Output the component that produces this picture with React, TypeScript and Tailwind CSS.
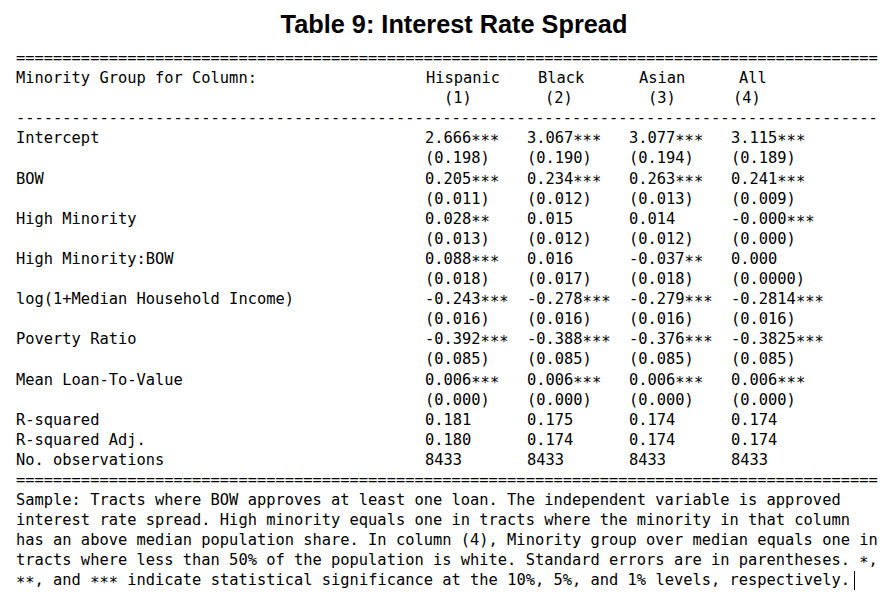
import React from "react";

type Row = { label: string; vals: string[]; ses?: string[] };

const rows: Row[] = [
  { label: "Intercept", vals: ["2.666***", "3.067***", "3.077***", "3.115***"], ses: ["(0.198)", "(0.190)", "(0.194)", "(0.189)"] },
  { label: "BOW", vals: ["0.205***", "0.234***", "0.263***", "0.241***"], ses: ["(0.011)", "(0.012)", "(0.013)", "(0.009)"] },
  { label: "High Minority", vals: ["0.028**", "0.015", "0.014", "-0.000***"], ses: ["(0.013)", "(0.012)", "(0.012)", "(0.000)"] },
  { label: "High Minority:BOW", vals: ["0.088***", "0.016", "-0.037**", "0.000"], ses: ["(0.018)", "(0.017)", "(0.018)", "(0.0000)"] },
  { label: "log(1+Median Household Income)", vals: ["-0.243***", "-0.278***", "-0.279***", "-0.2814***"], ses: ["(0.016)", "(0.016)", "(0.016)", "(0.016)"] },
  { label: "Poverty Ratio", vals: ["-0.392***", "-0.388***", "-0.376***", "-0.3825***"], ses: ["(0.085)", "(0.085)", "(0.085)", "(0.085)"] },
  { label: "Mean Loan-To-Value", vals: ["0.006***", "0.006***", "0.006***", "0.006***"], ses: ["(0.000)", "(0.000)", "(0.000)", "(0.000)"] },
  { label: "R-squared", vals: ["0.181", "0.175", "0.174", "0.174"] },
  { label: "R-squared Adj.", vals: ["0.180", "0.174", "0.174", "0.174"] },
  { label: "No. observations", vals: ["8433", "8433", "8433", "8433"] },
];

const notes = [
  "Sample: Tracts where BOW approves at least one loan. The independent variable is approved",
  "interest rate spread. High minority equals one in tracts where the minority in that column",
  "has an above median population share. In column (4), Minority group over median equals one in",
  "tracts where less than 50% of the population is white. Standard errors are in parentheses. *,",
];

function Stars({ text }: { text: string }) {
  const parts = text.split(/(\*+)/);
  return (
    <>
      {parts.map((p, i) =>
        p.startsWith("*") ? (
          <span key={i} className="relative top-[3px]">
            {p}
          </span>
        ) : (
          <React.Fragment key={i}>{p}</React.Fragment>
        )
      )}
    </>
  );
}

function DataLine({ label, cells }: { label: string; cells: string[] }) {
  return (
    <div className="flex whitespace-pre">
      <div className="w-[409px] shrink-0">{label}</div>
      {cells.map((c, i) => (
        <div key={i} className="w-[102px] shrink-0">
          <Stars text={c} />
        </div>
      ))}
    </div>
  );
}

export default function App() {
  return (
    <div className="w-[896px] h-[606px] bg-white text-black pt-[9px] overflow-hidden">
      <h1 className="ml-[16px] w-[876px] text-center font-['Liberation_Sans',Arial,sans-serif] font-bold text-[25.3px] leading-[30px]">
        Table 9: Interest Rate Spread
      </h1>
      <div className="mt-[9px] ml-[16px] w-[870px] font-['DejaVu_Sans_Mono',monospace] text-[15.4px] leading-[20.1px]">
        <div className="whitespace-pre overflow-hidden">{"=".repeat(93)}</div>
        <div className="flex whitespace-pre">
          <div className="w-[409px] shrink-0">Minority Group for Column:</div>
          <div className="w-[102px] shrink-0"><span className="ml-[1px]">Hispanic</span></div>
          <div className="w-[102px] shrink-0"><span className="ml-[11px]">Black</span></div>
          <div className="w-[102px] shrink-0"><span className="ml-[10px]">Asian</span></div>
          <div className="w-[102px] shrink-0"><span className="ml-[8px]">All</span></div>
        </div>
        <div className="flex whitespace-pre">
          <div className="w-[409px] shrink-0"> </div>
          <div className="w-[102px] shrink-0"><span className="ml-[19px]">(1)</span></div>
          <div className="w-[102px] shrink-0"><span className="ml-[18px]">(2)</span></div>
          <div className="w-[102px] shrink-0"><span className="ml-[19px]">(3)</span></div>
          <div className="w-[102px] shrink-0"><span className="ml-[2px]">(4)</span></div>
        </div>
        <div className="whitespace-pre overflow-hidden">{"-".repeat(93)}</div>
        {rows.map((r) => (
          <React.Fragment key={r.label}>
            <DataLine label={r.label} cells={r.vals} />
            {r.ses && <DataLine label="" cells={r.ses} />}
          </React.Fragment>
        ))}
        <div className="whitespace-pre overflow-hidden">{"=".repeat(93)}</div>
        {notes.map((n) => (
          <div key={n} className="whitespace-pre">
            <Stars text={n} />
          </div>
        ))}
        <div className="whitespace-pre">
          <Stars text="**, and *** indicate statistical significance at the 10%, 5%, and 1% levels, respectively." />
          <span className="inline-block w-px h-[19px] bg-black ml-[4px] align-[-5px]" />
        </div>
      </div>
    </div>
  );
}
